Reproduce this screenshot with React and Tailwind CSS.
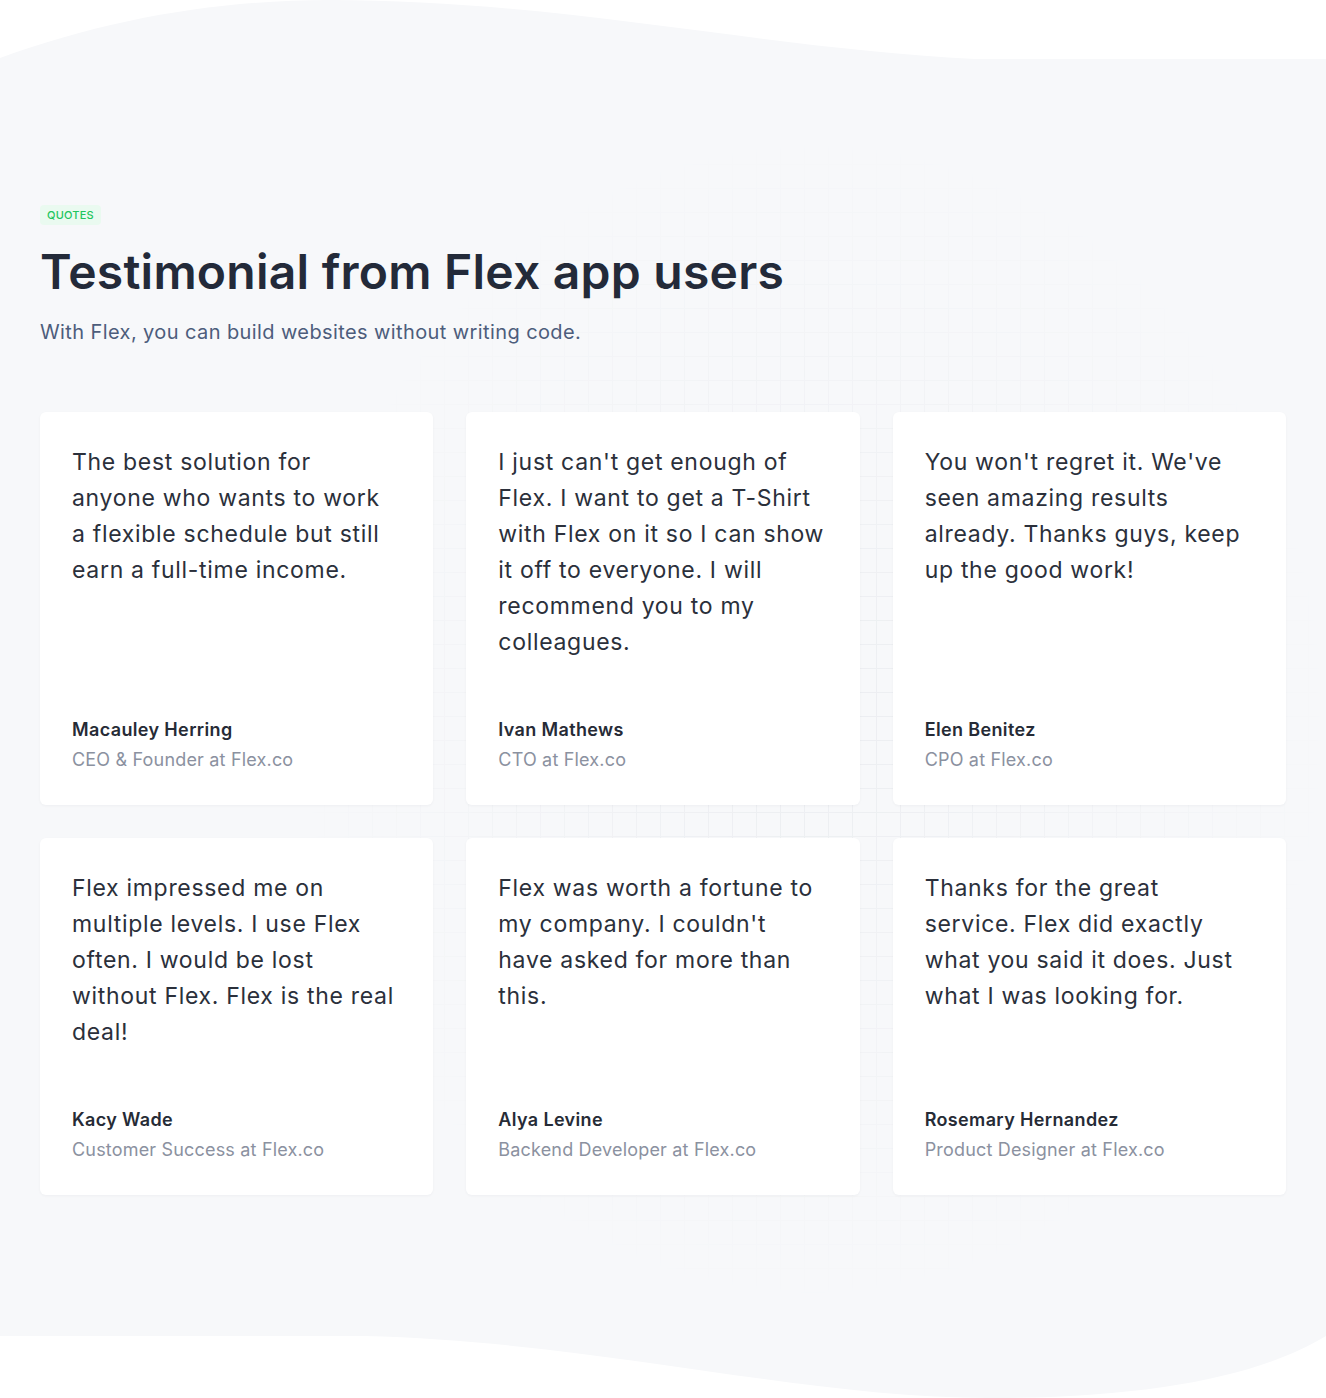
import React from "react";

const items = [
  {
    q: ["The best solution for", "anyone who wants to work", "a flexible schedule but still", "earn a full-time income."],
    n: "Macauley Herring",
    t: "CEO & Founder at Flex.co",
  },
  {
    q: ["I just can't get enough of", "Flex. I want to get a T-Shirt", "with Flex on it so I can show", "it off to everyone. I will", "recommend you to my", "colleagues."],
    n: "Ivan Mathews",
    t: "CTO at Flex.co",
  },
  {
    q: ["You won't regret it. We've", "seen amazing results", "already. Thanks guys, keep", "up the good work!"],
    n: "Elen Benitez",
    t: "CPO at Flex.co",
  },
  {
    q: ["Flex impressed me on", "multiple levels. I use Flex", "often. I would be lost", "without Flex. Flex is the real", "deal!"],
    n: "Kacy Wade",
    t: "Customer Success at Flex.co",
  },
  {
    q: ["Flex was worth a fortune to", "my company. I couldn't", "have asked for more than", "this."],
    n: "Alya Levine",
    t: "Backend Developer at Flex.co",
  },
  {
    q: ["Thanks for the great", "service. Flex did exactly", "what you said it does. Just", "what I was looking for."],
    n: "Rosemary Hernandez",
    t: "Product Designer at Flex.co",
  },
];

function Card({ q, n, t }) {
  return (
    <div className="flex flex-col rounded-md bg-white pl-8 pr-4 pt-8 pb-[31px] shadow-[0_1px_3px_rgba(16,24,40,0.04)]">
      <p className="text-[23px] leading-[36px] text-[#2b303b] tracking-[0.03em]">
        {q.map((line) => (
          <span key={line} className="block whitespace-nowrap">
            {line}
          </span>
        ))}
      </p>
      <div className="mt-auto pt-[58px]">
        <div className="text-[18px] leading-[24px] font-semibold tracking-[0.02em] text-[#262b36]">{n}</div>
        <div className="mt-[4px] text-[18px] leading-[28px] tracking-[0.01em] text-[#8b91a0]">{t}</div>
      </div>
    </div>
  );
}

export default function App() {
  return (
    <div className="bg-white">
      <section className="relative h-[1398px] overflow-hidden bg-[#f7f8fa] font-['Inter','Noto_Sans',sans-serif]">
        <svg className="absolute left-0 top-0 h-[60px] w-full" viewBox="0 0 1326 60" preserveAspectRatio="none">
          <path d="M0 0 L0 58 C110 18 220 0 330 0 C560 0 760 48 975 59 L1326 59 L1326 0 Z" fill="#ffffff" />
        </svg>
        <div className="pointer-events-none absolute left-[300px] right-0 top-[140px] bottom-[100px] bg-[linear-gradient(to_right,#e8eaee_1px,transparent_1px),linear-gradient(to_bottom,#e8eaee_1px,transparent_1px)] bg-[size:24px_24px] [mask-image:radial-gradient(ellipse_at_center,rgba(0,0,0,0.8),transparent_72%)]" />
        <svg className="absolute bottom-0 left-0 h-[62px] w-full" viewBox="0 0 1326 62" preserveAspectRatio="none">
          <path d="M0 0 L364 0 C600 6 800 62 990 62 C1150 62 1260 40 1326 0 L1326 62 L0 62 Z" fill="#ffffff" />
        </svg>
        <div className="relative px-10 pt-[205px]">
          <div className="w-fit rounded-[4px] bg-[#eafaf0] px-[7px] text-[11px] leading-[20px] font-medium tracking-[0.02em] text-[#22c55e]">
            QUOTES
          </div>
          <h1 className="mt-[18px] text-[48px] leading-[58px] font-semibold tracking-[0.005em] text-[#232a39]">
            Testimonial from Flex app users
          </h1>
          <p className="mt-[17px] text-[20px] leading-[28px] tracking-[0.02em] text-[#4d5d7c]">
            With Flex, you can build websites without writing code.
          </p>
          <div className="mt-[66px] grid grid-cols-3 gap-[33px]">
            {items.map((it) => (
              <Card key={it.n} {...it} />
            ))}
          </div>
        </div>
      </section>
    </div>
  );
}
